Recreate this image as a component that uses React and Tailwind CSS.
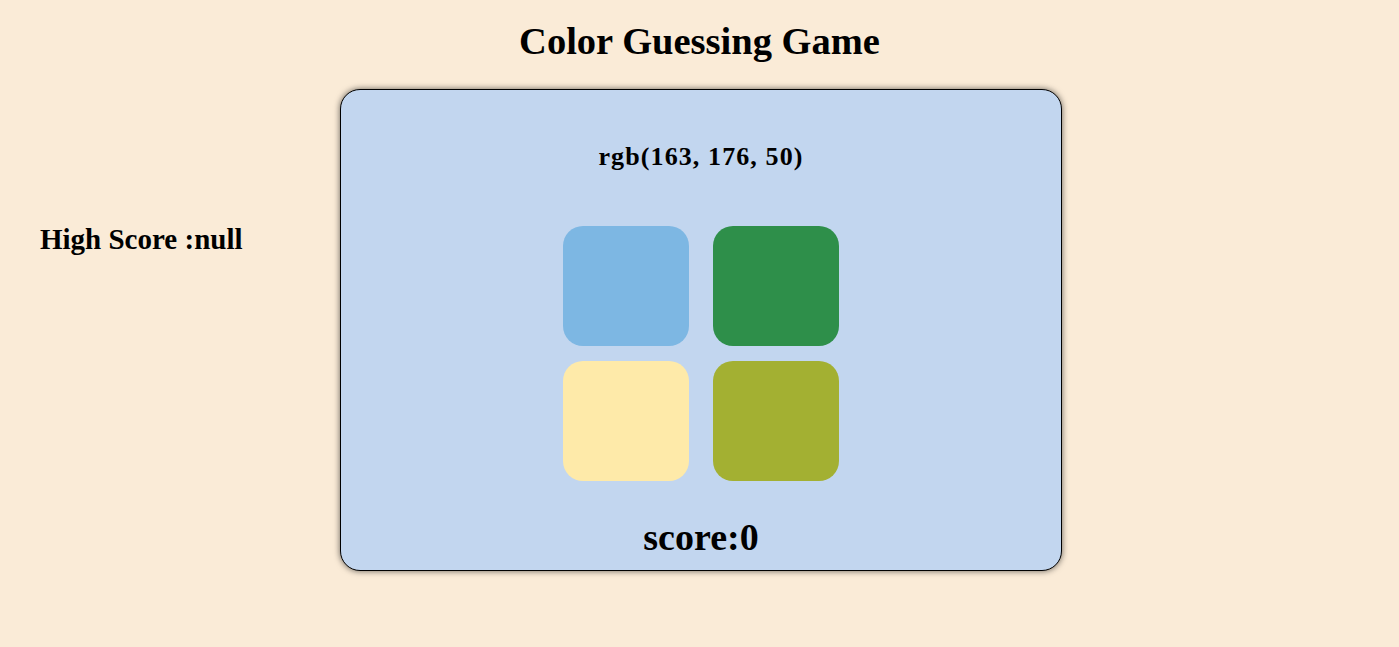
import React, { useState } from "react";

const COLORS = ["#7db7e3", "#2e8f4a", "#feeaa9", "#a3b032"];

const App = () => {
  const [score, setScore] = useState(0);
  const [highScore] = useState(null);
  const target = "rgb(163, 176, 50)";

  const pick = (c) => {
    if (c === "#a3b032") setScore((s) => s + 1);
  };

  return (
    <div className="min-h-screen bg-[#faebd7] font-['Liberation_Serif',serif] text-black">
      <h1 className="pt-[19px] text-center text-[38.5px] font-bold leading-[44px]">
        Color Guessing Game
      </h1>

      <div className="mt-[26px] grid grid-cols-[340px_722px_1fr]">
        {/* left column */}
        <div className="pl-[40px] pt-[134px]">
          <h2 className="text-[29px] font-bold leading-[33px] whitespace-nowrap">
            High Score :{String(highScore)}
          </h2>
        </div>

        {/* game card */}
        <div className="flex h-[482px] flex-col items-center rounded-[20px] border border-black bg-[#c2d6ef] shadow-[0_0_6px_rgba(0,0,0,0.6)]">
          <h3 className="mt-[52px] text-[26px] font-bold leading-[30px] tracking-[1.1px]">
            {target}
          </h3>

          <div className="mt-[54px] grid grid-cols-[126px_126px] gap-x-6 gap-y-[15px]">
            {COLORS.map((c, i) => (
              <button
                key={i}
                onClick={() => pick(c)}
                className="h-[120px] rounded-[20px]"
                style={{ backgroundColor: c }}
              />
            ))}
          </div>

          <h2 className="mt-[34px] text-[38px] font-bold leading-[44px]">
            score:{score}
          </h2>
        </div>
      </div>
    </div>
  );
};

export default App;
